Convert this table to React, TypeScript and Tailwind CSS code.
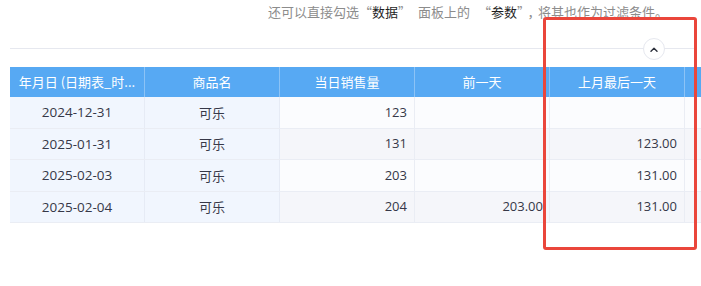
import React from 'react';

type Row = {
  date: string;
  name: string;
  qty: string;
  prev: string;
  lastMonth: string;
};

const rows: Row[] = [
  { date: '2024-12-31', name: '可乐', qty: '123', prev: '', lastMonth: '' },
  { date: '2025-01-31', name: '可乐', qty: '131', prev: '', lastMonth: '123.00' },
  { date: '2025-02-03', name: '可乐', qty: '203', prev: '', lastMonth: '131.00' },
  { date: '2025-02-04', name: '可乐', qty: '204', prev: '203.00', lastMonth: '131.00' }
];

const headers = ['年月日 (日期表_时...', '商品名', '当日销售量', '前一天', '上月最后一天', ''];

const App: React.FC = () => {
  return <div lang="zh-CN" className="relative w-[701px] h-[286px] overflow-hidden bg-white font-['Open_Sans','Noto_Sans_CJK_SC',sans-serif]">
      <div className="pl-[268px] pt-[3px] text-[13px] leading-[18px] h-[21px] text-[#8c8c8c] whitespace-nowrap font-['Noto_Sans_CJK_SC',sans-serif] [text-spacing-trim:space-all]">
        还可以直接勾选
        <span className="inline-block w-[13px] text-right">“</span>
        <span className="text-[#1f1f1f]">数据</span>
        <span className="inline-block w-[20px] text-left">”</span>
        面板上的
        <span className="inline-block w-[21px] text-right">“</span>
        <span className="text-[#1f1f1f]">参数</span>
        <span className="tracking-[-2.5px]">”，</span>
        将其也作为过滤条件。
      </div>

      <div className="relative mt-[27px] ml-[10px] mr-[6px] border-t border-[#e6e8ef]">
        <button className="absolute left-[633px] top-[-11px] w-[22px] h-[22px] rounded-full border border-[#e6e8ef] bg-white flex items-center justify-center">
          <svg width="8" height="5" viewBox="0 0 8 5" fill="none">
            <path d="M1 4.2 L4 1.2 L7 4.2" stroke="#2b2f3a" strokeWidth="1.4" strokeLinecap="round" strokeLinejoin="round" />
          </svg>
        </button>
      </div>

      <div className="mt-[18px] ml-[10px] w-[820px] text-[13px]">
        <div className="flex h-[30px] bg-[#57a9f3] text-white">
          {headers.map((h, i) => <div key={i} className="w-[135px] shrink-0 flex items-center justify-center border-r border-[#8cc3f6] whitespace-nowrap font-['Noto_Sans_CJK_SC',sans-serif]">
              {h}
            </div>)}
        </div>
        {rows.map((r, i) => {
        const rest = i % 2 === 0 ? 'bg-[#fbfcfe]' : 'bg-[#f5f6fa]';
        return <div key={r.date} className="flex h-[31.5px] text-[#363848] border-b border-[#eaedf4]">
              <div className="w-[135px] shrink-0 flex items-center justify-center bg-[#f1f6fe] border-r border-[#e6ebf5] text-[13.5px]">{r.date}</div>
              <div className="w-[135px] shrink-0 flex items-center justify-center bg-[#f1f6fe] border-r border-[#e6ebf5] font-['Noto_Sans_CJK_SC',sans-serif]">{r.name}</div>
              <div className={`w-[135px] shrink-0 flex items-center justify-end pr-[7px] border-r border-[#eaedf4] ${rest}`}>{r.qty}</div>
              <div className={`w-[135px] shrink-0 flex items-center justify-end pr-[6px] border-r border-[#eaedf4] ${rest}`}>{r.prev}</div>
              <div className={`w-[135px] shrink-0 flex items-center justify-end pr-[7px] border-r border-[#eaedf4] ${rest}`}>{r.lastMonth}</div>
              <div className={`w-[135px] shrink-0 ${rest}`}></div>
            </div>;
      })}
      </div>

      <div className="absolute left-[543px] top-[17px] w-[154px] h-[233px] border-[3px] border-[#ea463b] rounded-[3px]"></div>
    </div>;
};

export default App;
